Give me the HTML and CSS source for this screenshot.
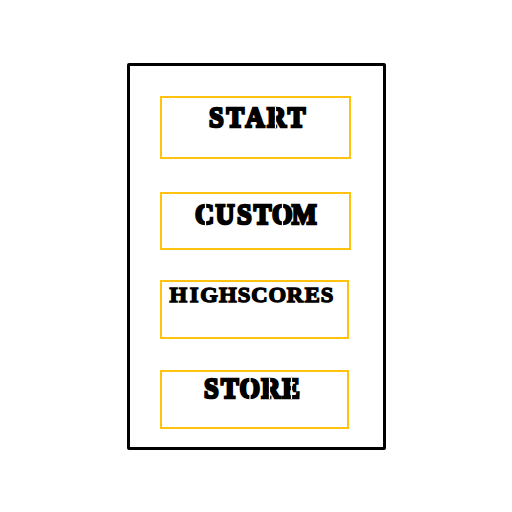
FILE: index.html
```html
<!DOCTYPE html>
<html lang="en">
<head>
<meta charset="utf-8">
<title>Menu</title>
<link rel="stylesheet" href="styles.css">
</head>
<body>
<nav class="menu">
  <a class="item item-start"><svg class="label" viewBox="0 0 187 40" width="187" height="40"><text class="large" transform="scale(.88 1)" y="29" x="61.8 83.3 105.6 130.2 152.8">START</text><path class="cut" d="M113.500 9v21"/></svg></a>
  <a class="item item-custom"><svg class="label" viewBox="0 0 187 40" width="187" height="40"><text class="large" transform="scale(.88 1)" y="30" x="48.3 71.5 93.6 114.4 136.6 161.7">CUSTOM</text><path class="cut" d="M43.500 9v23M120.500 9v23"/></svg></a>
  <a class="item item-scores"><svg class="label" viewBox="0 0 185 40" width="185" height="40"><text class="small" transform="scale(1.08 1)" y="20.500" x="15 29.8 43.6 60.9 76 90.3 106.7 123.2 139.2 152.8">HIGHSCORES</text></svg></a>
  <a class="item item-store"><svg class="label" viewBox="0 0 185 40" width="185" height="40"><text class="large" transform="scale(.88 1)" y="26" x="56.2 77.2 99.8 123.7 146.6">STORE</text><path class="cut" d="M88 5v23M107.500 6v21M129.500 6v21"/></svg></a>
</nav>
</body>
</html>
```
FILE: styles.css
```css
body { margin: 0; background: #fff; }
.menu { box-sizing: border-box; width: 259px; height: 387px; margin: 63px 0 0 127px; padding: 30px; border: 3px solid #000; border-radius: 2px; display: flex; flex-direction: column; }
.item { box-sizing: border-box; border: 2px solid #ffc20e; flex: none; }
.item-start { width: 191px; height: 63px; }
.item-custom { width: 191px; height: 58px; margin-top: 33px; }
.item-scores { width: 189px; height: 59px; margin-top: 30px; }
.item-store { width: 189px; height: 59px; margin-top: 31px; }
.label { display: block; overflow: visible; font-family: "Liberation Serif", serif; font-weight: bold; text-anchor: middle; }
.large { font-size: 30px; stroke: #000; stroke-width: 2.6px; }
.small { font-size: 21px; stroke: #000; stroke-width: 1.3px; }
.cut { fill: none; stroke: #fff; stroke-width: 1.2px; }
```
